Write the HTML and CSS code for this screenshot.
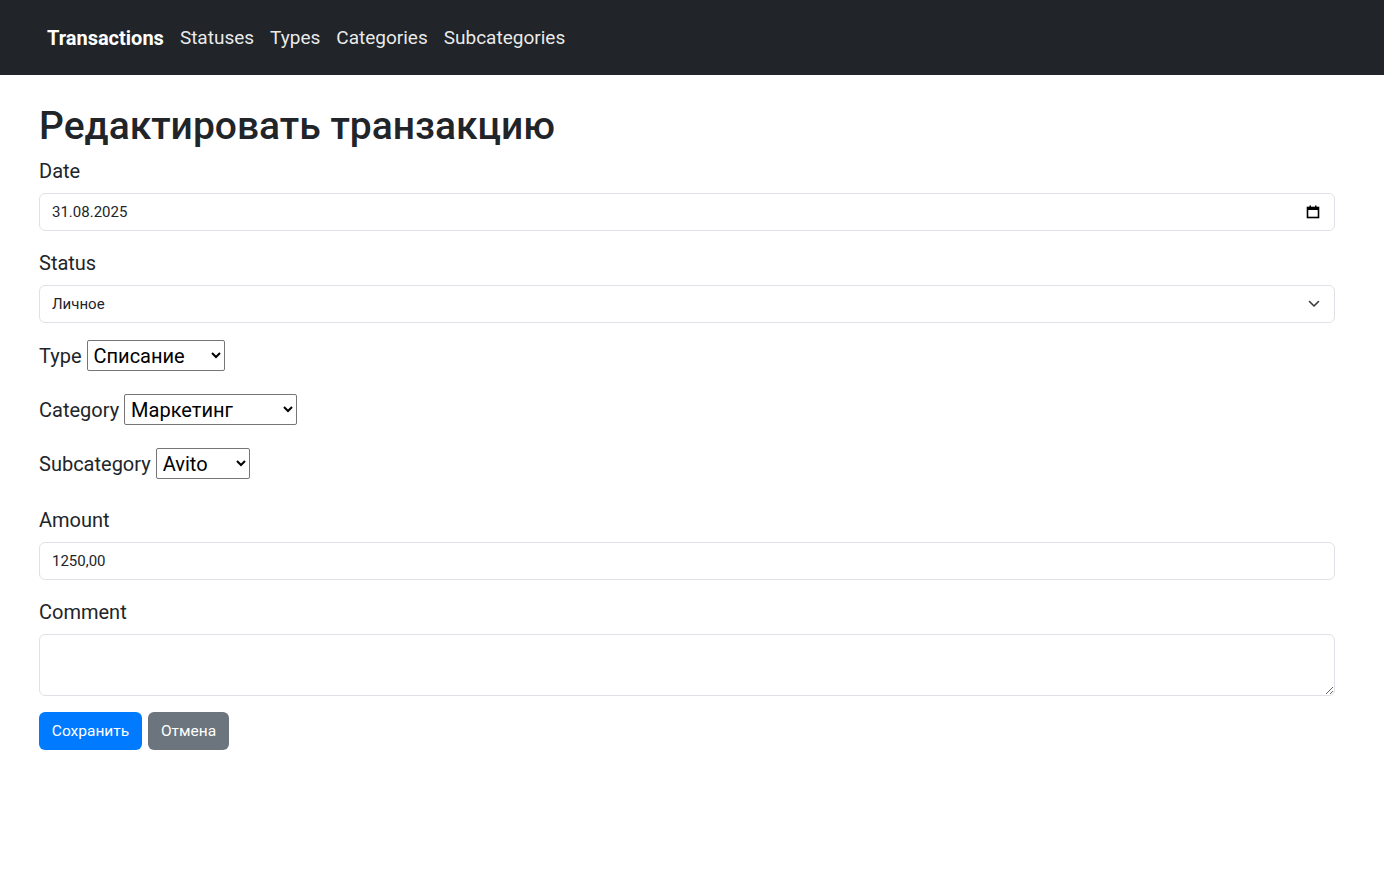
FILE: index.html
```html
<!DOCTYPE html>
<html lang="ru">
<head>
<meta charset="utf-8">
<title>Редактировать транзакцию</title>
<link rel="stylesheet" href="styles.css">
</head>
<body>
<nav class="navbar">
  <a class="brand" href="#">Transactions</a>
  <a class="nav-link" href="#">Statuses</a>
  <a class="nav-link" href="#">Types</a>
  <a class="nav-link" href="#">Categories</a>
  <a class="nav-link" href="#">Subcategories</a>
</nav>
<main class="container">
  <h1 class="title">Редактировать транзакцию</h1>
  <form class="form">
    <div class="group">
      <label class="label">Date</label>
      <div class="control with-icon">
        <span class="value">31.08.2025</span>
        <svg class="icon-cal" width="14" height="14" viewBox="0 0 14 14"><rect x="1.5" y="2.5" width="11" height="10" fill="none" stroke="#000" stroke-width="1.6"/><rect x="1.5" y="2.5" width="11" height="2.5" fill="#000"/><rect x="3.5" y="0.5" width="1.5" height="3" fill="#000"/><rect x="9" y="0.5" width="1.5" height="3" fill="#000"/></svg>
      </div>
    </div>
    <div class="group">
      <label class="label">Status</label>
      <div class="control with-icon">
        <span class="value">Личное</span>
        <svg class="icon-chev" width="12" height="8" viewBox="0 0 12 8"><path d="M1.5 1.5 L6 6 L10.5 1.5" fill="none" stroke="#343a40" stroke-width="1.6" stroke-linecap="round" stroke-linejoin="round"/></svg>
      </div>
    </div>
    <div class="inline-row first">
      <label class="inline-label">Type</label>
      <select class="native sel-type"><option>Списание</option></select>
    </div>
    <div class="inline-row">
      <label class="inline-label">Category</label>
      <select class="native sel-cat"><option>Маркетинг</option></select>
    </div>
    <div class="inline-row last">
      <label class="inline-label">Subcategory</label>
      <select class="native sel-sub"><option>Avito</option></select>
    </div>
    <div class="group">
      <label class="label">Amount</label>
      <div class="control"><span class="value">1250,00</span></div>
    </div>
    <div class="group">
      <label class="label">Comment</label>
      <textarea class="textarea"></textarea>
    </div>
    <div class="actions">
      <button type="button" class="btn btn-primary">Сохранить</button>
      <button type="button" class="btn btn-secondary">Отмена</button>
    </div>
  </form>
</main>
</body>
</html>
```

FILE: styles.css
```css
* { box-sizing: border-box; }
html, body { margin: 0; padding: 0; }
body {
  font-family: Roboto, "Noto Sans", "Liberation Sans", sans-serif;
  color: #212529;
  background: #fff;
}
.navbar {
  height: 75px;
  background: #212529;
  display: flex;
  align-items: center;
  gap: 16px;
  padding-left: 47px;
}
.brand {
  color: #fff;
  font-weight: 700;
  font-size: 20px;
  text-decoration: none;
}
.nav-link {
  color: rgba(255,255,255,0.92);
  font-size: 19px;
  text-decoration: none;
}
.container {
  margin-left: 39px;
  width: 1296px;
  padding-top: 27px;
}
.title {
  margin: 0 0 9px;
  font-size: 39px;
  line-height: 48px;
  font-weight: 500;
}
.group { margin-bottom: 20px; }
.label {
  display: block;
  font-size: 20px;
  line-height: 24px;
  margin-bottom: 10px;
}
.control {
  height: 38px;
  border: 1px solid #dee2e6;
  border-radius: 6px;
  display: flex;
  align-items: center;
  justify-content: space-between;
  padding: 0 20px 0 12px;
  font-size: 15px;
}
.icon-cal { display: block; margin-right: -6px; }
.icon-chev { display: block; margin-right: -6px; }
.inline-row {
  display: flex;
  align-items: center;
  gap: 5px;
  height: 31px;
  margin-bottom: 23px;
}
.inline-row.first { margin-top: -3px; }
.inline-row.last { margin-bottom: 29px; }
.inline-label { font-size: 20px; }
.native {
  font-family: inherit;
  font-size: 20px;
  height: 31px;
  color: #000;
  background: #fff;
  border: 1px solid #767676;
  border-radius: 2px;
  padding: 0 2px;
}
.sel-type { width: 138px; }
.sel-cat { width: 173px; }
.sel-sub { width: 94px; }
.textarea {
  display: block;
  width: 100%;
  height: 62px;
  border: 1px solid #dee2e6;
  border-radius: 6px;
  resize: vertical;
  font-family: inherit;
}
.actions {
  display: flex;
  gap: 6px;
  margin-top: -4px;
}
.btn {
  height: 38px;
  padding: 0 12px;
  border: none;
  border-radius: 6px;
  color: #fff;
  font-family: inherit;
  font-size: 15.5px;
}
.btn-primary { background: #007bff; width: 103px; }
.btn-secondary { background: #6c757d; width: 81px; }
```
